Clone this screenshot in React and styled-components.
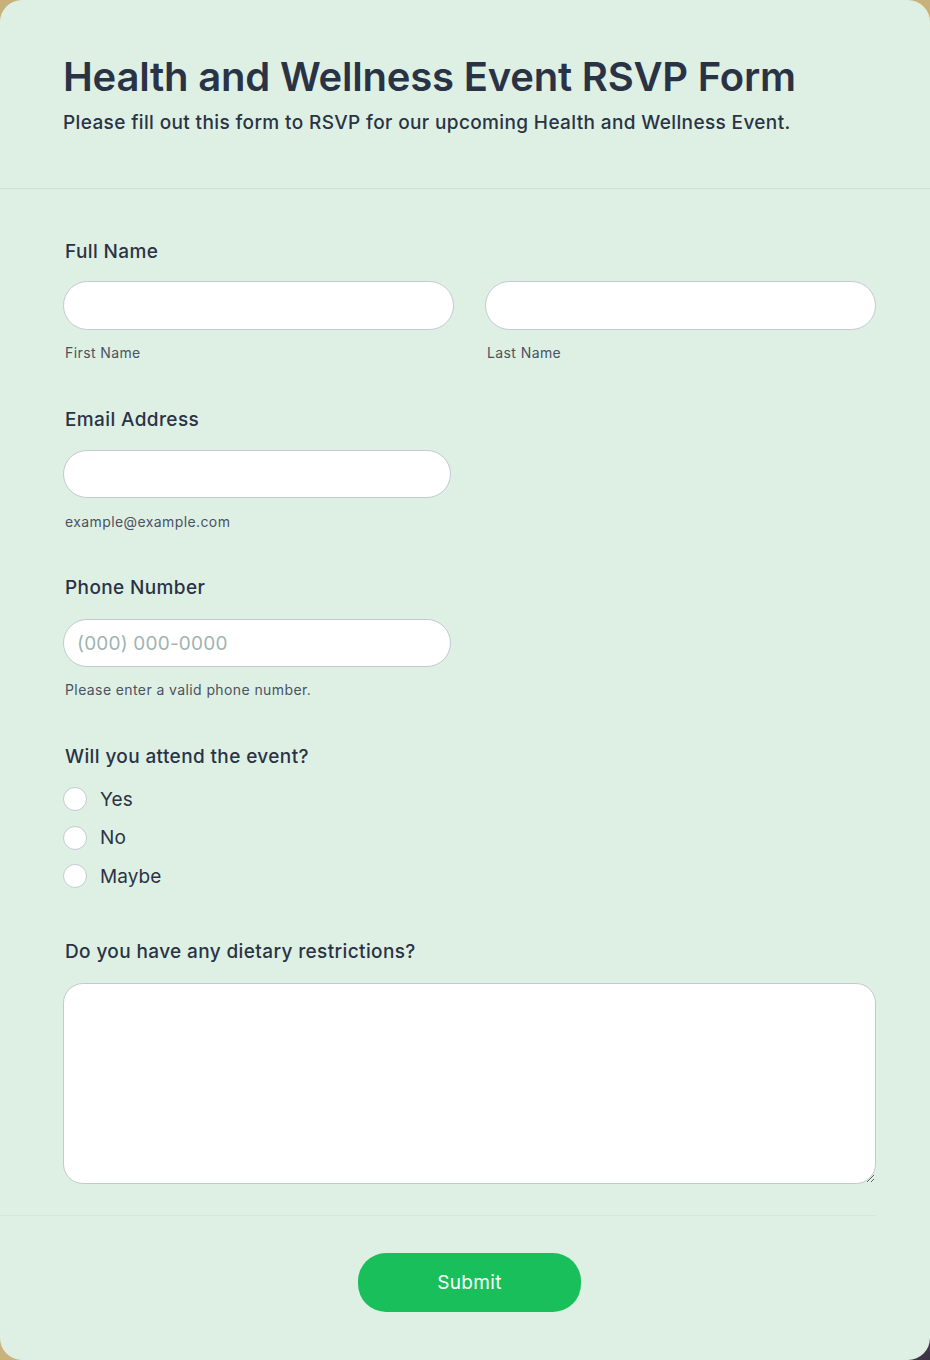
import React from "react";
import styled, { createGlobalStyle } from "styled-components";

const Global = createGlobalStyle`
  html, body { margin: 0; padding: 0; }
  body {
    background: linear-gradient(135deg, #c8b07a 0%, #c9b27c 70%, #3b3445 100%);
    font-family: Inter, "Noto Sans", Arial, sans-serif;
    -webkit-font-smoothing: antialiased;
  }
  * { box-sizing: border-box; }
`;

const Card = styled.div`
  width: 930px;
  height: 1360px;
  background: #def0e3;
  border-radius: 22px;
  overflow: hidden;
  color: #2b3443;
`;

const Header = styled.header`
  padding: 52px 63px 52px;
  border-bottom: 1px solid #cfdce0;
`;

const Title = styled.h1`
  margin: 0;
  font-size: 40px;
  line-height: 50px;
  font-weight: 600;
  letter-spacing: -0.2px;
  color: #2a3345;
`;

const Subtitle = styled.p`
  margin: 8px 0 0;
  font-size: 19px;
  line-height: 26px;
  font-weight: 500;
  letter-spacing: 0.37px;
  color: #2a3345;
`;

const Form = styled.form`
  padding: 51px 0 0 63px;
  width: 876px;
`;

const Group = styled.div`
  margin-bottom: ${(p) => p.$mb}px;
`;

const Label = styled.div`
  font-size: 19px;
  line-height: 24px;
  font-weight: 500;
  letter-spacing: 0.38px;
  color: #2a3345;
  padding-left: 2px;
  margin-bottom: ${(p) => p.$mb ?? 17}px;
`;

const Row = styled.div`
  display: grid;
  grid-template-columns: 391px 391px;
  column-gap: 31px;
`;

const Input = styled.input`
  display: block;
  width: ${(p) => p.$w || 391}px;
  height: ${(p) => p.$h || 49}px;
  border: 1px solid #c3c9d4;
  border-radius: 26px;
  background: #fff;
  padding: 0 13px;
  font-family: inherit;
  font-size: 19px;
  letter-spacing: 0.2px;
  color: #2a3345;
  outline: none;
  &::placeholder { color: #9fb3b2; }
`;

const Sub = styled.div`
  font-size: 14px;
  line-height: 20px;
  letter-spacing: 0.4px;
  color: #4a5263;
  padding-left: 2px;
  margin-top: ${(p) => p.$mt ?? 13}px;
`;

const RadioRow = styled.label`
  display: flex;
  align-items: center;
  height: 38.5px;
  gap: 13px;
  font-size: 19px;
  letter-spacing: 0.1px;
  color: #2a3345;
`;

const Circle = styled.span`
  width: 24px;
  height: 24px;
  border-radius: 50%;
  border: 1px solid #c3c9d4;
  background: #fff;
  flex: none;
`;

const TextArea = styled.textarea`
  display: block;
  width: 813px;
  height: 201px;
  border: 1px solid #c3c9d4;
  border-radius: 20px;
  background: #fff;
  resize: vertical;
  outline: none;
  font-family: inherit;
  font-size: 16px;
  padding: 12px;
`;

const Footer = styled.div`
  margin-top: 31px;
  border-top: 1px solid #d6e4e4;
  padding-top: 37px;
  display: flex;
  justify-content: center;
  width: 876px;
  margin-left: -63px;
  padding-left: 63px;
`;

const Submit = styled.button`
  width: 223px;
  height: 59px;
  border: none;
  border-radius: 28px;
  background: #18bf5b;
  color: #fff;
  font-family: inherit;
  font-size: 19px;
  font-weight: 400;
  letter-spacing: 0.3px;
`;

export default function App() {
  return (
    <>
      <Global />
      <Card>
        <Header>
          <Title>Health and Wellness Event RSVP Form</Title>
          <Subtitle>Please fill out this form to RSVP for our upcoming Health and Wellness Event.</Subtitle>
        </Header>
        <Form onSubmit={(e) => e.preventDefault()}>
          <Group $mb={45}>
            <Label>Full Name</Label>
            <Row>
              <div>
                <Input />
                <Sub>First Name</Sub>
              </div>
              <div>
                <Input />
                <Sub>Last Name</Sub>
              </div>
            </Row>
          </Group>
          <Group $mb={44}>
            <Label $mb={18}>Email Address</Label>
            <Input $w={388} $h={48} />
            <Sub $mt={14}>example@example.com</Sub>
          </Group>
          <Group $mb={45}>
            <Label $mb={19}>Phone Number</Label>
            <Input $w={388} $h={48} placeholder="(000) 000-0000" />
            <Sub>Please enter a valid phone number.</Sub>
          </Group>
          <Group $mb={44}>
            <Label $mb={11}>Will you attend the event?</Label>
            {["Yes", "No", "Maybe"].map((o) => (
              <RadioRow key={o}>
                <Circle />
                {o}
              </RadioRow>
            ))}
          </Group>
          <Group $mb={0}>
            <Label $mb={19}>Do you have any dietary restrictions?</Label>
            <TextArea />
          </Group>
          <Footer>
            <Submit type="button">Submit</Submit>
          </Footer>
        </Form>
      </Card>
    </>
  );
}
